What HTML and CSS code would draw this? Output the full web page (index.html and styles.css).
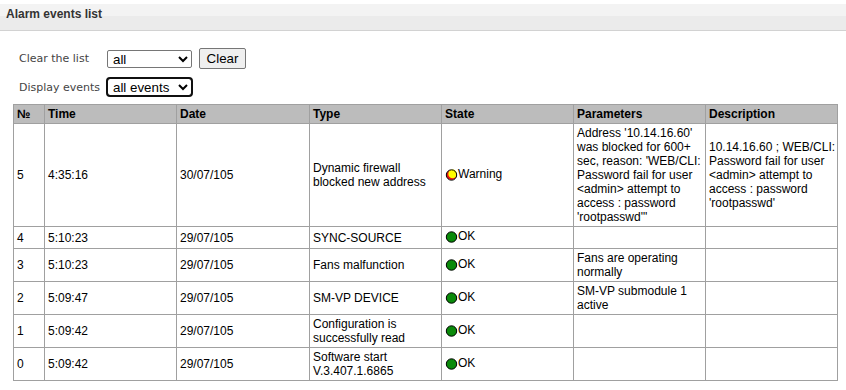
FILE: index.html
```html
<!DOCTYPE html>
<html lang="en">
<head>
    <meta charset="UTF-8">
    <title>Alarm events list</title>
    <link rel="stylesheet" href="styles.css">
</head>
<body>
    <div class="title-bar">Alarm events list</div>

    <div class="controls">
        <label class="ctl-label" for="clear-sel">Clear the list</label>
        <div class="ctl-row">
            <select id="clear-sel" class="sel">
                <option>all</option>
            </select>
            <button class="btn" type="button">Clear</button>
        </div>
        <label class="ctl-label" for="show-sel">Display events</label>
        <div class="ctl-row">
            <select id="show-sel" class="sel sel-focused">
                <option>all events</option>
            </select>
        </div>
    </div>

    <table class="events">
        <colgroup>
            <col class="c-num">
            <col class="c-wide">
            <col class="c-date">
            <col class="c-wide">
            <col class="c-wide">
            <col class="c-wide">
            <col class="c-wide">
        </colgroup>
        <thead>
            <tr>
                <th>№</th>
                <th>Time</th>
                <th>Date</th>
                <th>Type</th>
                <th>State</th>
                <th>Parameters</th>
                <th>Description</th>
            </tr>
        </thead>
        <tbody>
            <tr>
                <td>5</td>
                <td>4:35:16</td>
                <td>30/07/105</td>
                <td>Dynamic firewall blocked new address</td>
                <td><svg class="led" width="13" height="16" viewBox="0 0 13 16"><circle cx="6.5" cy="7" r="5" fill="#e81010"/><circle cx="7.6" cy="5.9" r="4.3" fill="#ffff00"/><circle cx="6.5" cy="7" r="5.2" fill="none" stroke="#000" stroke-width="1"/></svg>Warning</td>
                <td>Address '10.14.16.60' was blocked for 600+ sec, reason: 'WEB/CLI: Password fail for user &lt;admin&gt; attempt to access : password 'rootpasswd'"</td>
                <td>10.14.16.60 ; WEB/CLI: Password fail for user &lt;admin&gt; attempt to access : password 'rootpasswd'</td>
            </tr>
            <tr>
                <td>4</td>
                <td>5:10:23</td>
                <td>29/07/105</td>
                <td>SYNC-SOURCE</td>
                <td><svg class="led" width="13" height="16" viewBox="0 0 13 16"><circle cx="6.5" cy="7" r="5.2" fill="#0a8a0a" stroke="#000" stroke-width="1"/></svg>OK</td>
                <td></td>
                <td></td>
            </tr>
            <tr>
                <td>3</td>
                <td>5:10:23</td>
                <td>29/07/105</td>
                <td>Fans malfunction</td>
                <td><svg class="led" width="13" height="16" viewBox="0 0 13 16"><circle cx="6.5" cy="7" r="5.2" fill="#0a8a0a" stroke="#000" stroke-width="1"/></svg>OK</td>
                <td>Fans are operating normally</td>
                <td></td>
            </tr>
            <tr>
                <td>2</td>
                <td>5:09:47</td>
                <td>29/07/105</td>
                <td>SM-VP DEVICE</td>
                <td><svg class="led" width="13" height="16" viewBox="0 0 13 16"><circle cx="6.5" cy="7" r="5.2" fill="#0a8a0a" stroke="#000" stroke-width="1"/></svg>OK</td>
                <td>SM-VP submodule 1 active</td>
                <td></td>
            </tr>
            <tr>
                <td>1</td>
                <td>5:09:42</td>
                <td>29/07/105</td>
                <td>Configuration is successfully read</td>
                <td><svg class="led" width="13" height="16" viewBox="0 0 13 16"><circle cx="6.5" cy="7" r="5.2" fill="#0a8a0a" stroke="#000" stroke-width="1"/></svg>OK</td>
                <td></td>
                <td></td>
            </tr>
            <tr>
                <td>0</td>
                <td>5:09:42</td>
                <td>29/07/105</td>
                <td>Software start V.3.407.1.6865</td>
                <td><svg class="led" width="13" height="16" viewBox="0 0 13 16"><circle cx="6.5" cy="7" r="5.2" fill="#0a8a0a" stroke="#000" stroke-width="1"/></svg>OK</td>
                <td></td>
                <td></td>
            </tr>
        </tbody>
    </table>
</body>
</html>
```

FILE: styles.css
```css
body {
    margin: 0;
    padding: 0;
    background: #fff;
    color: #000;
    font-family: 'Liberation Sans', Arial, sans-serif;
}
.title-bar {
    margin-top: 4px;
    height: 23px;
    padding: 3px 0 0 6px;
    line-height: 14px;
    font-size: 12px;
    font-weight: bold;
    color: #333;
    background: linear-gradient(#f3f3f3 0, #f3f3f3 12px, #ebebeb 12px);
    border-bottom: 1px solid #d2d2d2;
}
.controls {
    display: grid;
    grid-template-columns: 88px auto;
    align-items: center;
    row-gap: 9px;
    margin: 17px 0 0 19px;
}
.ctl-label {
    font-family: 'DejaVu Sans', Verdana, sans-serif;
    font-size: 11px;
    color: #444;
}
.ctl-row {
    display: flex;
    align-items: center;
    gap: 7px;
}
.sel {
    width: 85px;
    height: 18px;
    font-family: 'Liberation Sans', Arial, sans-serif;
    font-size: 13.33px;
    color: #000;
    border: 1px solid #767676;
    border-radius: 2px;
    background: #fff;
    padding: 0 1px;
}
.sel-focused {
    outline: 2px solid #101010;
    outline-offset: -1px;
    border-radius: 3px;
}
.btn {
    height: 21px;
    width: 47px;
    padding: 0 6px;
    font-family: 'Liberation Sans', Arial, sans-serif;
    font-size: 13.33px;
    color: #000;
    background: #efefef;
    border: 1px solid #767676;
    border-radius: 2px;
}
.events {
    margin: 8px 0 0 13px;
    width: 825px;
    table-layout: fixed;
    border-collapse: collapse;
    font-size: 12px;
}
.c-num { width: 31px; }
.c-wide { width: 132px; }
.c-date { width: 133px; }
.events th,
.events td {
    border: 1px solid #a0a0a0;
    padding: 2px 1px 2px 3px;
    text-align: left;
    vertical-align: middle;
    line-height: 14px;
}
.events th {
    background-color: #bcbcbc;
    font-weight: bold;
}
.led {
    vertical-align: -6px;
}
```
